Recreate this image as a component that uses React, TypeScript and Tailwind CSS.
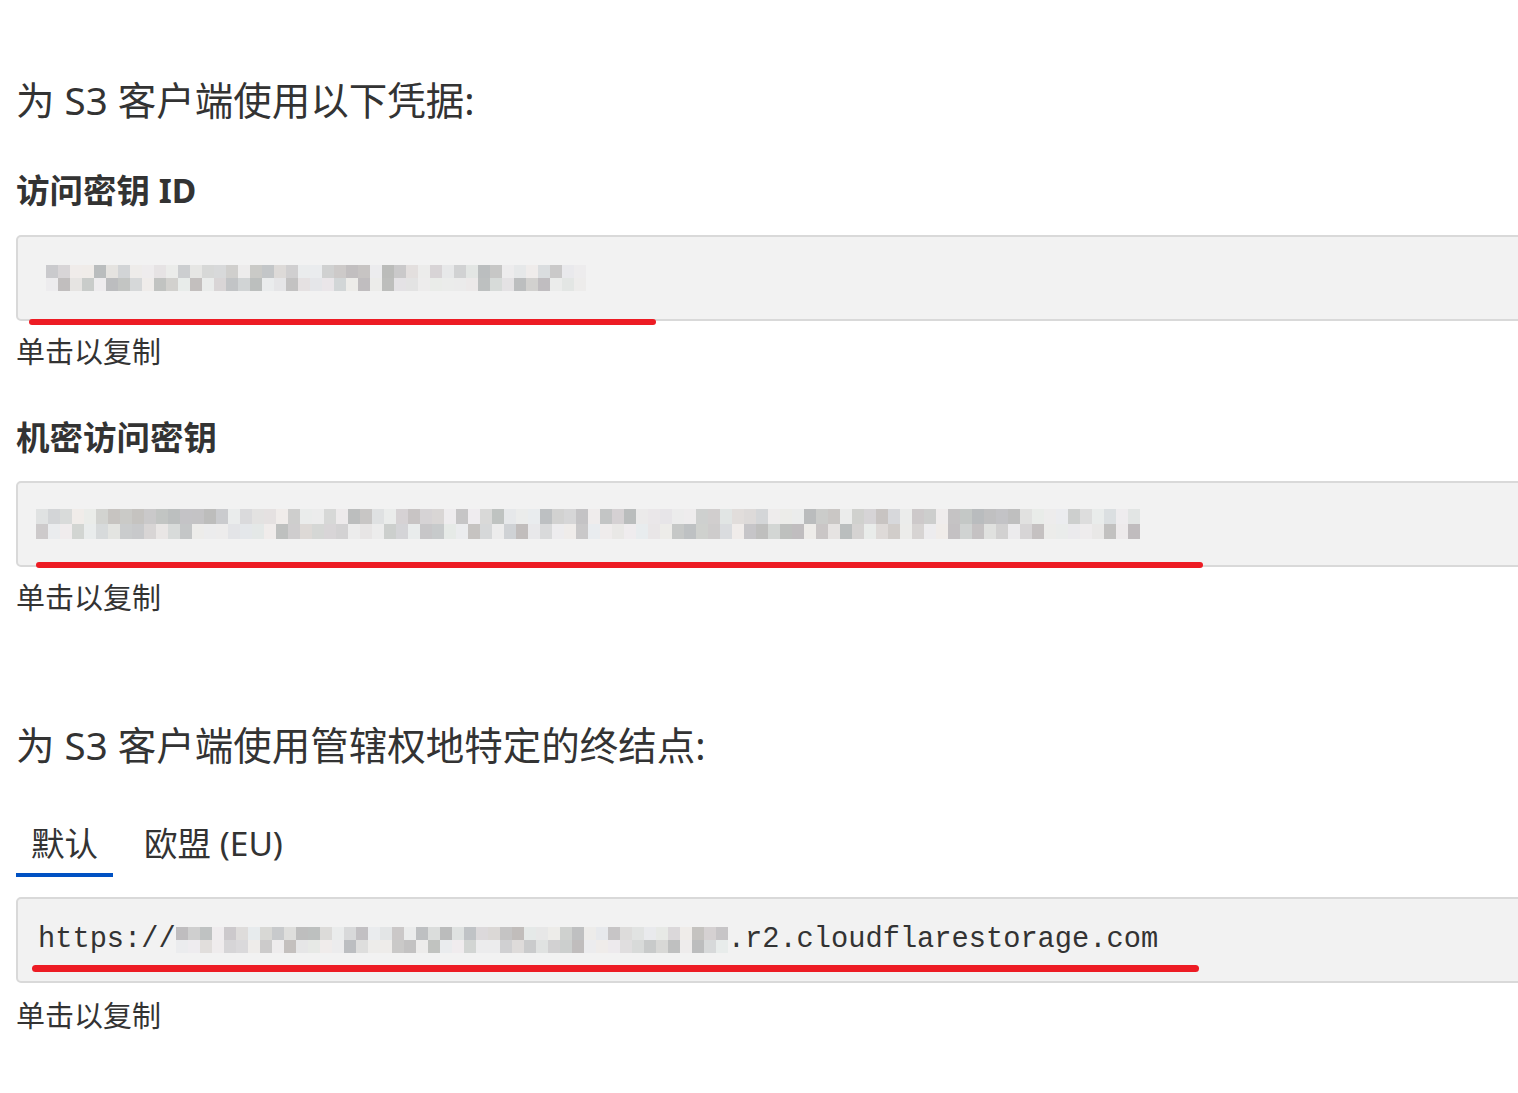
import React from "react";

function rng(seed: number) {
  let s = seed;
  return () => {
    s = (s * 1103515245 + 12345) % 2147483648;
    return s / 2147483648;
  };
}

function Mosaic({ cols, rows, cell, cellH, seed }: { cols: number; rows: number; cell: number; cellH: number; seed: number }) {
  const r = rng(seed);
  const grid: string[][] = [];
  for (let y = 0; y < rows; y++) {
    const row: string[] = [];
    for (let x = 0; x < cols; x++) {
      const v = r();
      const g = v < 0.25 ? 236 : Math.round(188 + r() * 48);
      const tint = Math.round((r() - 0.5) * 8);
      row.push(`rgb(${g + tint},${g},${g + Math.round((r() - 0.5) * 6)})`);
    }
    grid.push(row);
  }
  return (
    <div className="flex flex-col">
      {grid.map((row, i) => (
        <div key={i} className="flex">
          {row.map((c, j) => (
            <div key={j} style={{ width: cell, height: cellH, background: c }} />
          ))}
        </div>
      ))}
    </div>
  );
}

function Box({ children, line, pl }: { children: React.ReactNode; line: { left: number; top: number; width: number; h: number }; pl: string }) {
  return (
    <div className={`relative w-[1560px] h-[86px] border-2 border-[#d9d9d9] bg-[#f2f2f2] rounded-[5px] flex items-center ${pl}`}>
      {children}
      <div
        className="absolute rounded-full bg-[#ed1c24]"
        style={{ left: line.left, top: line.top, width: line.width, height: line.h }}
      />
    </div>
  );
}

export default function App() {
  const font = { fontFamily: '"Noto Sans", "Noto Sans CJK SC", sans-serif' };
  return (
    <div className="w-full min-h-screen bg-white overflow-hidden text-[#333333]" style={font}>
      <div className="pl-[16px] pt-[76px]">
        <h1 className="text-[38.5px] leading-[48px] font-normal">为 S3 客户端使用以下凭据:</h1>

        <h2 className="mt-[46px] text-[33.5px] leading-[40px] font-bold">访问密钥 ID</h2>
        <div className="mt-[25px]">
          <Box pl="pl-[28px]" line={{ left: 11, top: 82, width: 627, h: 6 }}>
            <Mosaic cols={45} rows={2} cell={12} cellH={13} seed={7} />
          </Box>
        </div>
        <div className="mt-[13px] text-[29px] leading-[36px]">单击以复制</div>

        <h2 className="mt-[47px] text-[33.5px] leading-[40px] font-bold">机密访问密钥</h2>
        <div className="mt-[24px]">
          <Box pl="pl-[18px]" line={{ left: 18, top: 79, width: 1167, h: 6 }}>
            <Mosaic cols={92} rows={2} cell={12} cellH={15} seed={31} />
          </Box>
        </div>
        <div className="mt-[13px] text-[29px] leading-[36px]">单击以复制</div>

        <h1 className="mt-[105px] text-[38.5px] leading-[48px] font-normal">为 S3 客户端使用管辖权地特定的终结点:</h1>

        <div className="mt-[54px] flex">
          <div className="px-[15px] pb-[10px] border-b-4 border-[#0051c3] text-[33.5px] leading-[40px]">默认</div>
          <div className="ml-[16px] px-[15px] pb-[10px] text-[33.5px] leading-[40px]">欧盟 (EU)</div>
        </div>

        <div className="mt-[20px]">
          <Box pl="pl-[20px]" line={{ left: 14, top: 66, width: 1167, h: 7 }}>
            <div className="flex items-center text-[28.7px] leading-[36px] text-[#333333]" style={{ fontFamily: '"Liberation Mono", monospace' }}>
              <span>https://</span>
              <Mosaic cols={46} rows={2} cell={12} cellH={13} seed={91} />
              <span>.r2.cloudflarestorage.com</span>
            </div>
          </Box>
        </div>
        <div className="mt-[15px] text-[29px] leading-[36px]">单击以复制</div>
      </div>
    </div>
  );
}
